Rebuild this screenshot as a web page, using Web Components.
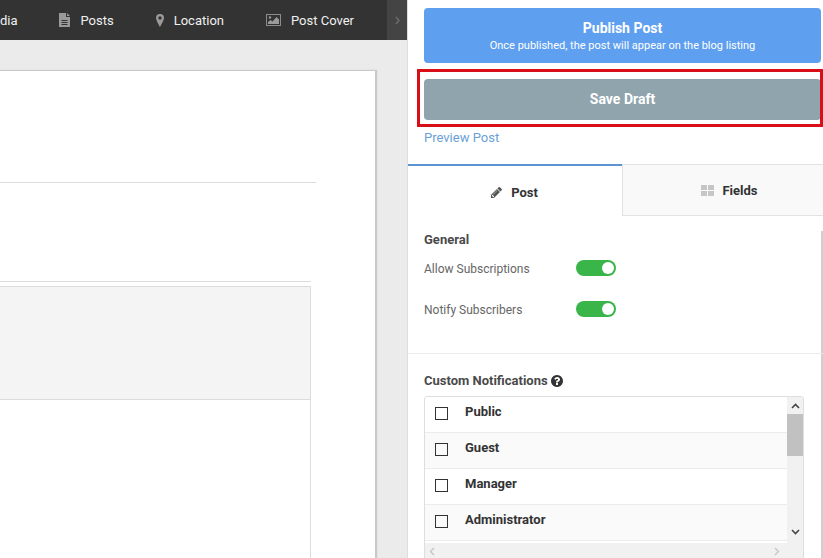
<!doctype html>
<html><head><meta charset="utf-8">
<style>
html,body{margin:0;height:100%;overflow:hidden;font-family:Roboto,"Liberation Sans",sans-serif}
</style></head><body>
<app-shell>
  <div slot="left">
    <nav-bar>
      <nav-item label="Media"></nav-item>
      <nav-item label="Posts" ig="10" style="margin-left:42px"><svg viewBox="0 0 11 14" width="11" height="14"><path fill="#9a9a9a" fill-rule="evenodd" d="M0 0h7v4h4v10H0zM8 0l3 3H8zM2.500 7h6v1h-6zM2.500 9h6v1h-6zM2.500 11h6v1h-6z"/></svg></nav-item>
      <nav-item label="Location" ig="10" style="margin-left:42px"><svg viewBox="0 0 8 13" width="8" height="13"><path fill="#9a9a9a" fill-rule="evenodd" d="M4 0a4 4 0 0 1 4 4c0 1.800-2.500 6.500-4 9C2.500 10.500 0 5.800 0 4a4 4 0 0 1 4-4zm0 2.300a1.700 1.700 0 1 0 0 3.400 1.700 1.700 0 0 0 0-3.400z"/></svg></nav-item>
      <nav-item label="Post Cover" ig="10" style="margin-left:42px"><svg viewBox="0 0 15 12" width="15" height="12"><path fill="#8c8c8c" fill-rule="evenodd" d="M0 0h15v12H0zM1 1v10h13V1z"/><path fill="#9a9a9a" d="M2 10V8l2.500-2 2 1.500L10.500 3 13 5.500V10z"/><circle cx="4" cy="3.500" r="1.200" fill="#9a9a9a"/></svg></nav-item>
    </nav-bar>
    <editor-paper></editor-paper>
  </div>
  <side-panel slot="right">
    <action-button tall style="--bg:#5f9ff0">Publish Post<span slot="sub">Once published, the post will appear on the blog listing</span></action-button>
    <action-button style="--bg:#90a4ae;--mt:16px;--tp:2px">Save Draft</action-button>
    <preview-link>Preview Post</preview-link>
    <tab-bar></tab-bar>
    <settings-section>
      <section-title>General</section-title>
      <toggle-row>Allow Subscriptions</toggle-row>
      <toggle-row>Notify Subscribers</toggle-row>
    </settings-section>
    <notify-section>
      <notify-row>Public</notify-row>
      <notify-row alt>Guest</notify-row>
      <notify-row>Manager</notify-row>
      <notify-row alt>Administrator</notify-row>
    </notify-section>
    <red-frame></red-frame>
  </side-panel>
</app-shell>
<script>
function def(name, css, html){
  customElements.define(name, class extends HTMLElement{
    constructor(){super();const r=this.attachShadow({mode:'open'});
      r.innerHTML='<style>'+css+'</style>'+(typeof html==='function'?html(this):html);}
  });
}
def('app-shell',
 ':host{display:flex;width:823px;height:558px;overflow:hidden;background:#ebebeb}'+
 '.l{width:407px;flex:none;overflow:hidden;display:flex;flex-direction:column}.r{flex:1;min-width:0}',
 '<div class="l"><slot name="left"></slot></div><div class="r"><slot name="right"></slot></div>');
def('nav-bar',
 ':host{display:flex;height:40px;background:#333;justify-content:flex-end;overflow:hidden}'+
 '.items{display:flex;justify-content:flex-end;flex:none;white-space:nowrap}'+
 '.a{width:20px;flex:none;background:#444;display:flex;align-items:center;justify-content:center;margin-left:33px}',
 '<div class="items"><slot></slot></div><div class="a"><svg width="5" height="9" viewBox="0 0 5 9"><path d="M1 1l3 3.500L1 8" fill="none" stroke="#6d6d6d" stroke-width="1.400"/></svg></div>');
def('nav-item',
 ':host{display:flex;align-items:center;height:40px;color:#f0f0f0;font-size:13px;margin-left:41px;flex:none}'+
 'span{display:block}.i{display:flex;align-items:center}',
 h=>'<div class="i" style="margin-right:'+(h.getAttribute('ig')||0)+'px"><slot></slot></div><span></span>');
def('editor-paper',
 ':host{display:block;flex:1;margin:30px 30px 0 -20px;background:#fff;border:1px solid #c9c9c9;border-width:1px 2px 0 0;box-shadow:0 0 2px rgba(0,0,0,.08)}'+
 '.line1{margin-top:111px;height:1px;background:#dcdcdc;width:336px}'+
 '.line2{margin-top:98px;height:1px;background:#dcdcdc;width:331px}'+
 '.box{margin-top:4px;width:330px;height:112px;background:#f4f4f4;border:1px solid #dcdcdc;border-left:0}'+
 '.rest{width:330px;height:160px;border-right:1px solid #dcdcdc}',
 '<div class="line1"></div><div class="line2"></div><div class="box"></div><div class="rest"></div>');
def('side-panel',
 ':host{display:block;position:relative;height:558px;background:#fff;border-left:1px solid #dedede;box-sizing:border-box;overflow:hidden}',
 '<slot></slot>');
def('action-button',
 ':host{display:flex;flex-direction:column;align-items:center;justify-content:center;margin:var(--mt,8px) 2px 0 16px;background:var(--bg);color:#fff;border-radius:4px;font-size:14px;font-weight:700;height:41px;box-sizing:border-box;padding-bottom:var(--tp,0)}'+
 ':host([tall]){height:55px}'+
 '::slotted([slot=sub]){font-size:11px;font-weight:400;margin-top:3px;line-height:13px}.t{line-height:16px}',
 '<div class="t"><slot></slot></div><slot name="sub"></slot>');
def('preview-link',
 ':host{display:block;margin:10px 0 0 16px;font-size:13px;line-height:15px;color:#6a9fd8;height:34px}','<slot></slot>');
def('tab-bar',
 ':host{display:flex;height:52px}'+
 '.t{display:flex;align-items:center;justify-content:center;font-size:13px;font-weight:700;color:#333;box-sizing:border-box}'+
 '.a{width:214px;border-top:2px solid #5b93d3;padding:4px 2px 1px 0}'+
 '.b{flex:1;border-top:1px solid #e2e2e2;border-left:1px solid #e2e2e2;border-bottom:1px solid #e2e2e2;background:#f9f9f9;padding:0 1px 0 14px}'+
 'svg{margin-right:8px}',
 '<div class="t a"><svg width="13" height="13" viewBox="0 0 1792 1792"><path fill="#555" d="M491 1536l91-91-235-235-91 91v107h128v128h107zm523-928q0-22-22-22-10 0-17 7l-542 542q-7 7-7 17 0 22 22 22 10 0 17-7l542-542q7-7 7-17zm-54-192l416 416-832 832h-416v-416zm683 96q0 53-37 90l-166 166-416-416 166-165q36-38 90-38 53 0 91 38l235 234q37 39 37 91z"/></svg>Post</div>'+
 '<div class="t b"><svg width="13" height="11" viewBox="0 0 13 11" style="margin-right:8px"><path fill="#c6c6c6" d="M0 0h6v5H0zM7 0h6v5H7zM0 6h6v5H0zM7 6h6v5H7z"/></svg>Fields</div>');
def('settings-section',
 ':host{display:block;padding:16px 16px 0;height:121px;border-bottom:1px solid #ececec;position:relative}'+
 '.sb{position:absolute;right:0;top:15px;bottom:0;width:2px;background:#cfcfcf}',
 '<slot></slot><div class="sb"></div>');
def('section-title',
 ':host{display:block;font-size:13px;font-weight:700;line-height:15px;color:#4a4a4a;margin-bottom:1px}','<slot></slot>');
def('toggle-row',
 ':host{display:flex;align-items:center;height:41px;font-size:12px;color:#666}'+
 '.l{width:152px}'+
 '.s{width:40px;height:16px;border-radius:8px;background:#39b54a;position:relative;margin-top:-2px}'+
 '.s i{position:absolute;right:2px;top:2px;width:12px;height:12px;border-radius:50%;background:#fff}',
 '<div class="l"><slot></slot></div><div class="s"><i></i></div>');
def('notify-section',
 ':host{display:block;padding:19px 0 0 16px;position:relative}'+
 '.sb{position:absolute;right:0;top:0;bottom:0;width:2px;background:#cfcfcf}'+
 '.h{display:flex;align-items:center;font-size:13px;font-weight:700;line-height:15px;color:#4a4a4a;margin-bottom:8px}'+
 '.h svg{margin-left:3px}'+
 '.box{width:380px;height:164px;box-sizing:border-box;border:1px solid #dedede;border-radius:3px 3px 0 0;display:grid;grid-template:1fr 16px/1fr 16px;overflow:hidden}'+
 '.list{overflow:hidden}'+
 '.v{background:#f1f1f1;display:flex;flex-direction:column;align-items:center;justify-content:space-between;position:relative;padding:6px 0 8px;box-sizing:border-box}'+
 '.v .thumb{position:absolute;left:0;right:0;top:17px;height:42px;background:#c1c1c1}'+
 '.hb{background:#f1f1f1;display:flex;justify-content:space-between;align-items:center;padding:0 23px 0 4px;grid-column:1/3}',
 '<div class="h">Custom Notifications<svg width="12" height="12" viewBox="128 128 1536 1536"><path fill="#333" d="M1024 1376v-192q0-14-9-23t-23-9h-192q-14 0-23 9t-9 23v192q0 14 9 23t23 9h192q14 0 23-9t9-23zm256-672q0-88-55.500-163t-138.500-116-170-41q-243 0-371 213-15 24 8 42l132 100q7 6 19 6 16 0 25-12 53-68 86-92 34-24 86-24 48 0 85.500 26t37.500 59q0 38-20 61t-68 45q-63 28-115.500 86.500t-52.500 125.500v36q0 14 9 23t23 9h192q14 0 23-9t9-23q0-19 21.500-49.500t54.500-49.500q32-18 49-28.500t46-35 44.500-48 28-60.500 12.500-81zm384 192q0 209-103 385.500t-279.500 279.500-385.500 103-385.500-103-279.500-279.500-103-385.500 103-385.500 279.500-279.500 385.500-103 385.500 103 279.500 279.500 103 385.500z"/></svg></div>'+
 '<div class="box"><div class="list"><slot></slot></div>'+
 '<div class="v"><svg width="9" height="6" viewBox="0 0 9 6"><path d="M1 5l3.500-3.500L8 5" fill="none" stroke="#444" stroke-width="1.600"/></svg><div class="thumb"></div><svg width="9" height="6" viewBox="0 0 9 6"><path d="M1 1l3.500 3.500L8 1" fill="none" stroke="#444" stroke-width="1.600"/></svg></div>'+
 '<div class="hb"><svg width="6" height="9" viewBox="0 0 6 9"><path d="M5 1L1.500 4.500 5 8" fill="none" stroke="#c4c4c4" stroke-width="1.300"/></svg><svg width="6" height="9" viewBox="0 0 6 9"><path d="M1 1l3.500 3.500L1 8" fill="none" stroke="#c4c4c4" stroke-width="1.300"/></svg></div></div>'+
 '<div class="sb"></div>');
def('notify-row',
 ':host{display:flex;height:36px;box-sizing:border-box;border-bottom:1px solid #ececec;font-size:13px;font-weight:700;color:#333}'+
 ':host([alt]){background:#fafafa}'+
 '.c{width:13px;height:13px;box-sizing:border-box;border:1px solid #333;margin:10px 0 0 10px;flex:none}'+
 '.t{margin:7px 0 0 17px;line-height:15px}',
 '<div class="c"></div><div class="t"><slot></slot></div>');
def('red-frame',
 ':host{position:absolute;left:9px;top:69px;width:406px;height:58px;box-sizing:border-box;border:3px solid #d80f16;pointer-events:none}','');
document.querySelectorAll('nav-item').forEach(n=>{n.shadowRoot.querySelector('span').textContent=n.getAttribute('label');});
</script>
</body></html>
